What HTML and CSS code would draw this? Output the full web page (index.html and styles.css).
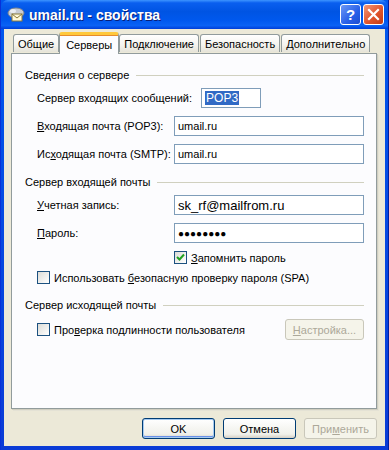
FILE: index.html
```html
<!DOCTYPE html>
<html lang="ru">
<head>
    <meta charset="UTF-8">
    <title>umail.ru - свойства</title>
    <link rel="stylesheet" href="styles.css">
</head>
<body>
    <div class="window">
        <div class="titlebar">
            <svg class="title-icon" width="18" height="16" viewBox="0 0 18 16">
                <ellipse cx="9" cy="6" rx="8" ry="5" fill="#c8ccd4" stroke="#7d8590"/>
                <ellipse cx="6" cy="4" rx="3" ry="2" fill="#e9ecf1"/>
                <rect x="5" y="7" width="10" height="7" fill="#fff8d8" stroke="#8a7a3a"/>
                <path d="M5 7 L10 11 L15 7" fill="none" stroke="#8a7a3a"/>
            </svg>
            <span class="title-text">umail.ru - свойства</span>
            <div class="title-buttons">
                <span class="tb-btn help">?</span>
                <span class="tb-btn close">
                    <svg width="13" height="13" viewBox="0 0 13 13"><path d="M2 2 L11 11 M11 2 L2 11" stroke="#fff" stroke-width="2.2" stroke-linecap="square"/></svg>
                </span>
            </div>
        </div>

        <div class="client">
            <div class="tabs">
                <span class="tab">Общие</span>
                <span class="tab active">Серверы</span>
                <span class="tab">Подключение</span>
                <span class="tab">Безопасность</span>
                <span class="tab">Дополнительно</span>
            </div>

            <div class="panel">
                <div class="group-title"><span>Сведения о сервере</span></div>
                <div class="row first server-type">
                    <span class="label">Сервер входящих сообщений:</span>
                    <span class="field short"><span class="selected">POP3</span></span>
                </div>
                <div class="row">
                    <span class="label"><u>В</u>ходящая почта (POP3):</span>
                    <span class="field">umail.ru</span>
                </div>
                <div class="row">
                    <span class="label">Ис<u>х</u>одящая почта (SMTP):</span>
                    <span class="field">umail.ru</span>
                </div>

                <div class="group-title second"><span>Сервер входящей почты</span></div>
                <div class="row first">
                    <span class="label"><u>У</u>четная запись:</span>
                    <span class="field big">sk_rf@mailfrom.ru</span>
                </div>
                <div class="row">
                    <span class="label"><u>П</u>ароль:</span>
                    <span class="field big dots">●●●●●●●●</span>
                </div>
                <label class="check remember">
                    <span class="box checked">
                        <svg width="11" height="11" viewBox="0 0 11 11"><path d="M2 5 L4.5 7.5 L9 2.5" fill="none" stroke="#21a121" stroke-width="2"/></svg>
                    </span>
                    <span><u>З</u>апомнить пароль</span>
                </label>
                <label class="check spa">
                    <span class="box"></span>
                    <span>Использовать <u>б</u>езопасную проверку пароля (SPA)</span>
                </label>

                <div class="group-title third"><span>Сервер исходящей почты</span></div>
                <div class="auth-row">
                    <label class="check">
                        <span class="box"></span>
                        <span>Про<u>в</u>ерка подлинности пользователя</span>
                    </label>
                    <span class="button disabled"><u>Н</u>астройка...</span>
                </div>
            </div>

            <div class="footer">
                <span class="button default">OK</span>
                <span class="button">Отмена</span>
                <span class="button disabled">При<u>м</u>енить</span>
            </div>
        </div>
    </div>
</body>
</html>
```

FILE: styles.css
```css
* {
    margin: 0;
    padding: 0;
    box-sizing: border-box;
}

body {
    width: 389px;
    height: 450px;
    font-family: 'Liberation Sans', Arial, sans-serif;
    font-size: 11px;
    color: #000;
    background: #fff;
    white-space: nowrap;
}

.window {
    width: 389px;
    height: 450px;
    display: flex;
    flex-direction: column;
    background: linear-gradient(to bottom, #0058ee, #0a3bd6);
    padding: 0 3px 4px 3px;
    border-left: 1px solid #0831d9;
    border-right: 1px solid #001ea0;
}

.titlebar {
    height: 29px;
    display: flex;
    align-items: center;
    margin: 0 -3px;
    padding: 0 4px 0 6px;
    background: linear-gradient(to bottom, #3d95ff 0%, #0a5fef 10%, #0054e3 40%, #0058ee 70%, #0a62f5 88%, #003ed8 100%);
    border-radius: 7px 7px 0 0;
}

.title-icon {
    margin-right: 4px;
}

.title-text {
    flex: 1;
    color: #fff;
    font-weight: bold;
    font-size: 14px;
    font-family: 'Liberation Sans', sans-serif;
    text-shadow: 1px 1px 0 #0a1e78;
}

.title-buttons {
    display: flex;
    gap: 2px;
}

.tb-btn {
    width: 21px;
    height: 21px;
    display: flex;
    align-items: center;
    justify-content: center;
    border: 1px solid #fff;
    border-radius: 3px;
    color: #fff;
    font-weight: bold;
    font-size: 15px;
}

.help {
    background: linear-gradient(135deg, #6c98f5, #2860e8 60%, #1c4dd0);
}

.close {
    background: linear-gradient(135deg, #f29878, #e0552d 55%, #c33a14);
}

.client {
    flex: 1;
    background: #ece9d8;
    padding: 4px 8px 0 7px;
    display: flex;
    flex-direction: column;
}

.tabs {
    display: flex;
    align-items: flex-end;
    padding-left: 2px;
    height: 20px;
    position: relative;
    z-index: 1;
}

.tab {
    height: 18px;
    padding: 0 4px;
    margin-right: 1px;
    display: flex;
    align-items: center;
    border: 1px solid #919b9c;
    border-bottom: none;
    border-radius: 3px 3px 0 0;
    background: linear-gradient(to bottom, #fff, #f4f3ee 60%, #e5e3d8);
    margin-bottom: 1px;
}

.tab.active {
    height: 22px;
    margin: 0 0 -1px -1px;
    padding: 0 6px;
    background: #fcfcfe;
    border-top: 3px solid #ffc83c;
    box-shadow: inset 0 1px 0 #e68b2c;
}

.tab.active + .tab {
    margin-left: 0;
}

.panel {
    height: 356px;
    background: #fcfcfe;
    border: 1px solid #919b9c;
    box-shadow: 1px 1px 0 #d0cec0, 2px 2px 0 #e4e2d5;
    padding: 14px 12px 0 13px;
}

.group-title {
    display: flex;
    align-items: center;
    height: 14px;
    gap: 7px;
}

.group-title::after {
    content: "";
    flex: 1;
    border-top: 1px solid #d0d0bf;
}

.group-title.second {
    margin-top: 11px;
}

.group-title.third {
    margin-top: 14px;
}

.row {
    display: flex;
    align-items: center;
    height: 20px;
    margin-top: 8px;
    padding-left: 12px;
}

.row.first {
    margin-top: 6px;
}

.label {
    width: 137px;
    flex-shrink: 0;
}

.server-type .label {
    width: auto;
    margin-right: 9px;
}

.field {
    flex: 1;
    height: 20px;
    border: 1px solid #7f9db9;
    background: #fff;
    display: flex;
    align-items: center;
    padding-left: 3px;
    font-size: 11px;
}

.field.short {
    flex: none;
    width: 60px;
    font-size: 12px;
}

.field.big {
    font-size: 13px;
}

.field.dots {
    font-size: 10px;
}

.selected {
    background: #316ac5;
    color: #fff;
    padding: 0 1px;
}

.check {
    display: flex;
    align-items: center;
    gap: 4px;
    height: 13px;
}

.box {
    width: 13px;
    height: 13px;
    border: 1px solid #1c5180;
    background: linear-gradient(135deg, #dcdcd7, #fff);
    display: flex;
    align-items: center;
    justify-content: center;
}

.remember {
    margin: 8px 0 0 149px;
}

.spa {
    margin: 7px 0 0 12px;
}

.auth-row {
    display: flex;
    align-items: center;
    justify-content: space-between;
    margin-top: 7px;
    padding-left: 12px;
    height: 21px;
}

.button {
    width: 73px;
    height: 21px;
    display: flex;
    align-items: center;
    justify-content: center;
    border: 1px solid #003c74;
    border-radius: 3px;
    background: linear-gradient(to bottom, #fff, #f0f0ea 80%, #d6d0c5);
}

.button.disabled {
    width: 79px;
    border-color: #c9c7ba;
    background: #f5f4ea;
    color: #aca899;
}

.button.default {
    box-shadow: inset 0 0 0 1px #a6caf0, inset 0 -1px 0 1px #6990e8;
}

.footer {
    display: flex;
    justify-content: flex-end;
    gap: 8px;
    margin-top: 9px;
}

.footer .button {
    width: 73px;
}
```
